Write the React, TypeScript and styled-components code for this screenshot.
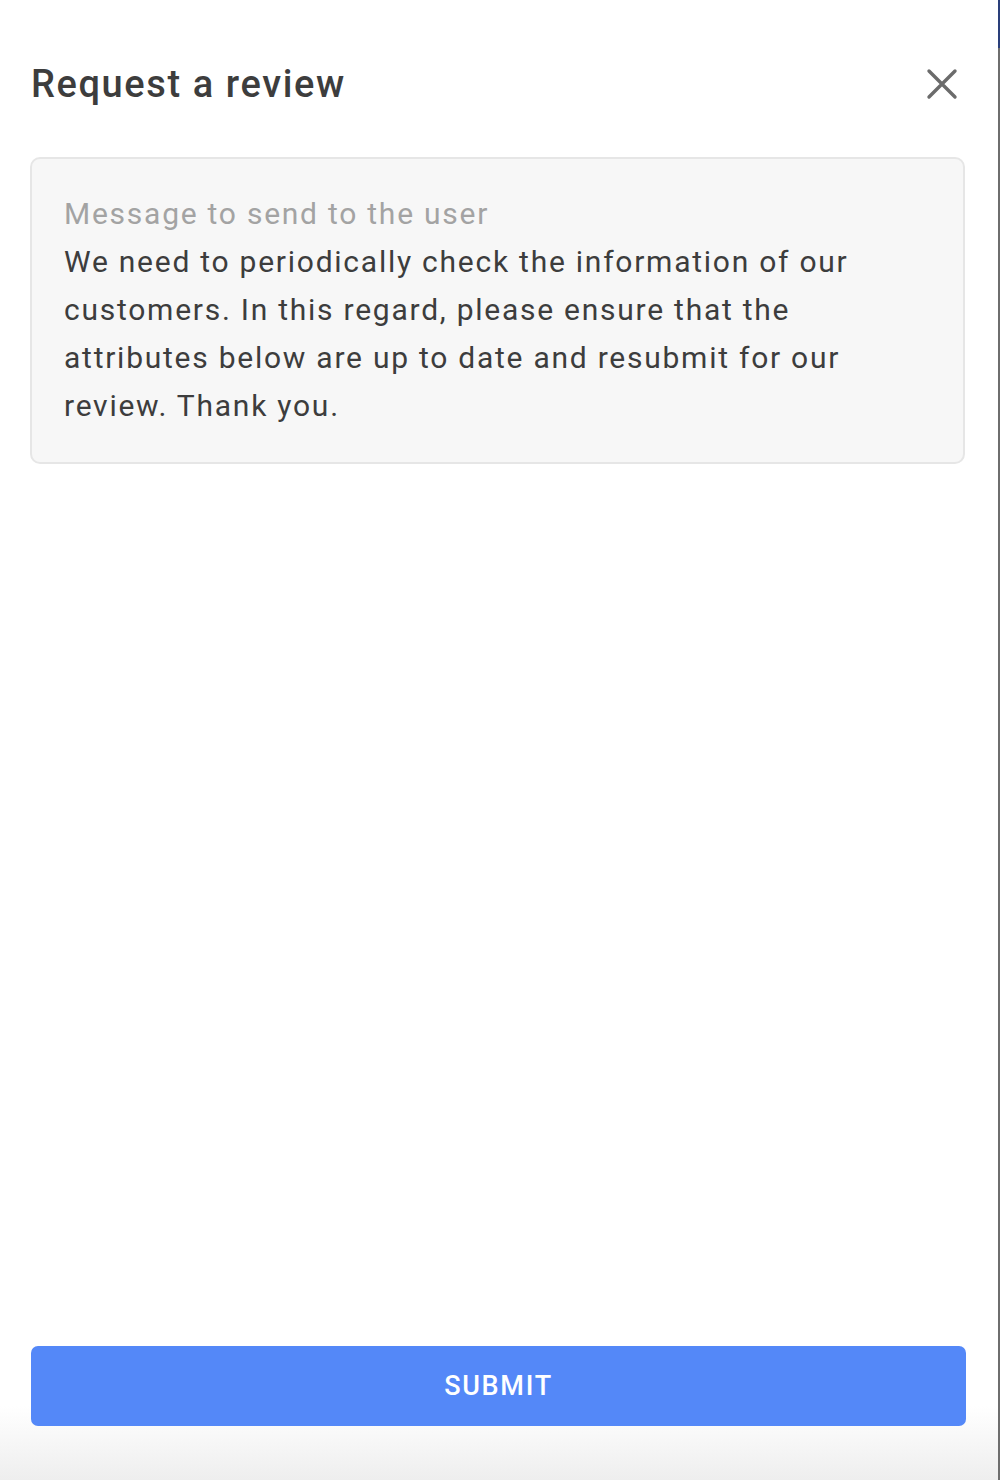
import styled, { createGlobalStyle } from 'styled-components';

const GlobalStyle = createGlobalStyle`
  html, body {
    margin: 0;
    padding: 0;
    background: #ffffff;
  }
  * {
    box-sizing: border-box;
  }
`;

const Drawer = styled.div`
  width: 1000px;
  height: 1480px;
  display: flex;
  flex-direction: column;
  padding: 56px 33px 54px 30px;
  font-family: Roboto, "Liberation Sans", sans-serif;
  border-right: 2px solid #6e6e6e;
  background: linear-gradient(to bottom, #ffffff 0%, #ffffff 95%, #eeeeee 100%);
  position: relative;

  &::before {
    content: '';
    position: absolute;
    top: 0;
    right: -2px;
    width: 2px;
    height: 48px;
    background: #2a3f7a;
  }
`;

const Header = styled.div`
  display: flex;
  align-items: center;
  justify-content: space-between;
  height: 56px;
  margin-bottom: 45px;
`;

const Title = styled.h1`
  margin: 0 0 0 1px;
  font-size: 38px;
  font-weight: 500;
  color: #3d3d3d;
  letter-spacing: 1.6px;
`;

const CloseButton = styled.button`
  border: none;
  background: transparent;
  padding: 0;
  width: 40px;
  height: 40px;
  margin-right: 3px;
  display: flex;
  align-items: center;
  justify-content: center;
  cursor: pointer;
`;

const MessageBox = styled.div`
  border: 2px solid #e6e6e6;
  border-radius: 10px;
  background: #f7f7f7;
  padding: 34px 32px 32px 32px;
`;

const Label = styled.div`
  font-size: 30px;
  line-height: 48px;
  color: #a3a3a3;
  letter-spacing: 1.75px;
  margin-top: -3px;
`;

const Message = styled.p`
  margin: 0;
  font-size: 30px;
  line-height: 48px;
  color: #3d3d3d;
  letter-spacing: 1.75px;
`;

const Spacer = styled.div`
  flex: 1;
`;

const SubmitButton = styled.button`
  height: 80px;
  width: 100%;
  border: none;
  border-radius: 7px;
  background: #5488f8;
  color: #ffffff;
  font-family: Roboto, "Liberation Sans", sans-serif;
  font-size: 27px;
  font-weight: 500;
  letter-spacing: 1.7px;
  text-transform: uppercase;
  cursor: pointer;
  margin-left: 1px;
`;

const App = () => {
  return (
    <>
      <GlobalStyle />
      <Drawer>
        <Header>
          <Title>Request a review</Title>
          <CloseButton aria-label="Close">
            <svg width="32" height="32" viewBox="0 0 32 32">
              <path
                d="M3 3 L29 29 M29 3 L3 29"
                stroke="#6b6b6b"
                strokeWidth="3.4"
                strokeLinecap="round"
              />
            </svg>
          </CloseButton>
        </Header>

        <MessageBox>
          <Label>Message to send to the user</Label>
          <Message>
            We need to periodically check the information of our customers. In this regard,
            please ensure that the attributes below are up to date and resubmit for our review.
            Thank you.
          </Message>
        </MessageBox>

        <Spacer />

        <SubmitButton>Submit</SubmitButton>
      </Drawer>
    </>
  );
};

export default App;
